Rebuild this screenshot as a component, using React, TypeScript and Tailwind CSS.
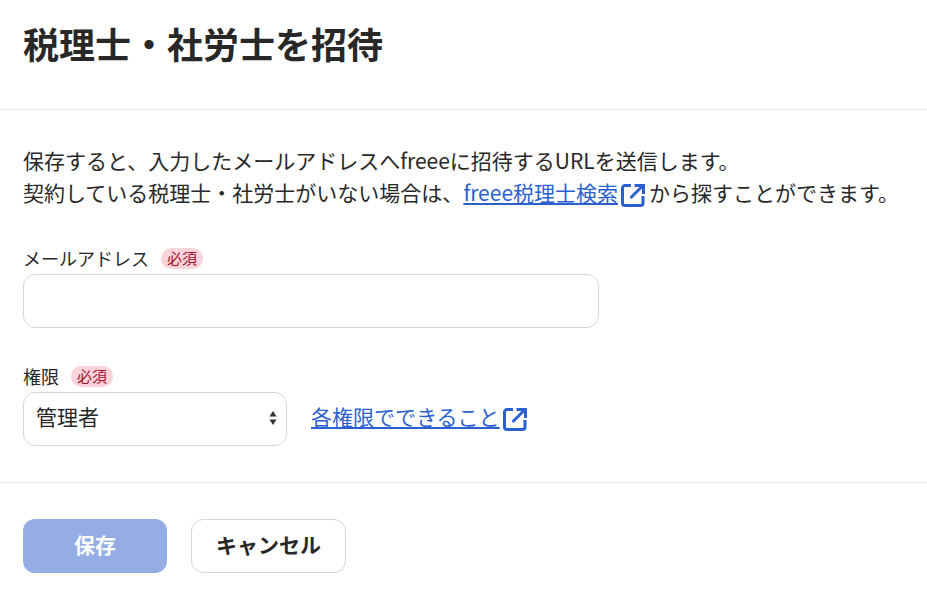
function ExternalIcon() {
  return (
    <svg viewBox="0 0 24 24" className="inline-block w-[24px] h-[24px] align-[-6px] ml-[3px] mr-[4px]" fill="none" stroke="#2c5fd0" strokeWidth="3">
      <path d="M10 2.500H4A2.500 2.500 0 0 0 1.500 5V20A2.500 2.500 0 0 0 4 22.500h15.500A2.500 2.500 0 0 0 22 20v-7" />
      <path d="M13.500 2.500H22.500V11M21.500 3L9.500 15" />
    </svg>
  );
}

function Required() {
  return <span className="ml-3 w-[42px] h-[21px] text-center rounded-full bg-[#fbd3da] text-[15px] leading-[19px] text-[#a50f30]">必須</span>;
}

export default function App() {
  return (
    <div className="w-[927px] h-[596px] overflow-hidden bg-white text-[#282828] font-['Noto_Sans_CJK_JP',sans-serif]">
      <div className="px-[23px] h-[110px] border-b border-[#e6e6e6] pt-[16px]">
        <h1 className="text-[36px] font-bold leading-[54px]">税理士・社労士を招待</h1>
      </div>
      <div className="px-[23px] pt-[34px] h-[373px] border-b border-[#e6e6e6]">
        <p className="text-[21px] leading-[32px] whitespace-nowrap">
          保存すると、入力したメールアドレスへfreeeに招待するURLを送信します。<br />
          契約している税理士・社労士がいない場合は、<a className="text-[#2c5fd0] underline">freee税理士検索<ExternalIcon /></a>から探すことができます。
        </p>
        <div className="mt-[37px] flex items-center text-[18px] leading-[27px]">メールアドレス<Required /></div>
        <input className="mt-[2px] block w-[576px] h-[54px] rounded-[12px] border border-[#d7d7d7]" />
        <div className="mt-[35px] flex items-center text-[18px] leading-[27px]">権限<Required /></div>
        <div className="flex items-center gap-[24px] mt-[2px]">
          <div className="w-[264px] h-[54px] rounded-[12px] border border-[#d7d7d7] flex items-center justify-between pl-[12px] pr-[9px] text-[21px]">
            <span className="mb-[4px]">管理者</span>
            <svg viewBox="0 0 8 16" className="w-[8px] h-[16px] mb-[2px]" fill="#333333"><path d="M4 1l3.500 5.500h-7zM4 15L.5 9.500h7z" /></svg>
          </div>
          <a className="text-[21px] text-[#2c5fd0] underline mb-[4px]">各権限でできること<ExternalIcon /></a>
        </div>
      </div>
      <div className="px-[23px] pt-[36px] flex gap-[24px]">
        <button className="w-[144px] h-[54px] rounded-[12px] bg-[#94ade5] text-white text-[21px] font-bold pb-[3px]">保存</button>
        <button className="w-[155px] h-[54px] rounded-[12px] border border-[#d7d7d7] text-[21px] font-bold pb-[3px]">キャンセル</button>
      </div>
    </div>
  );
}
